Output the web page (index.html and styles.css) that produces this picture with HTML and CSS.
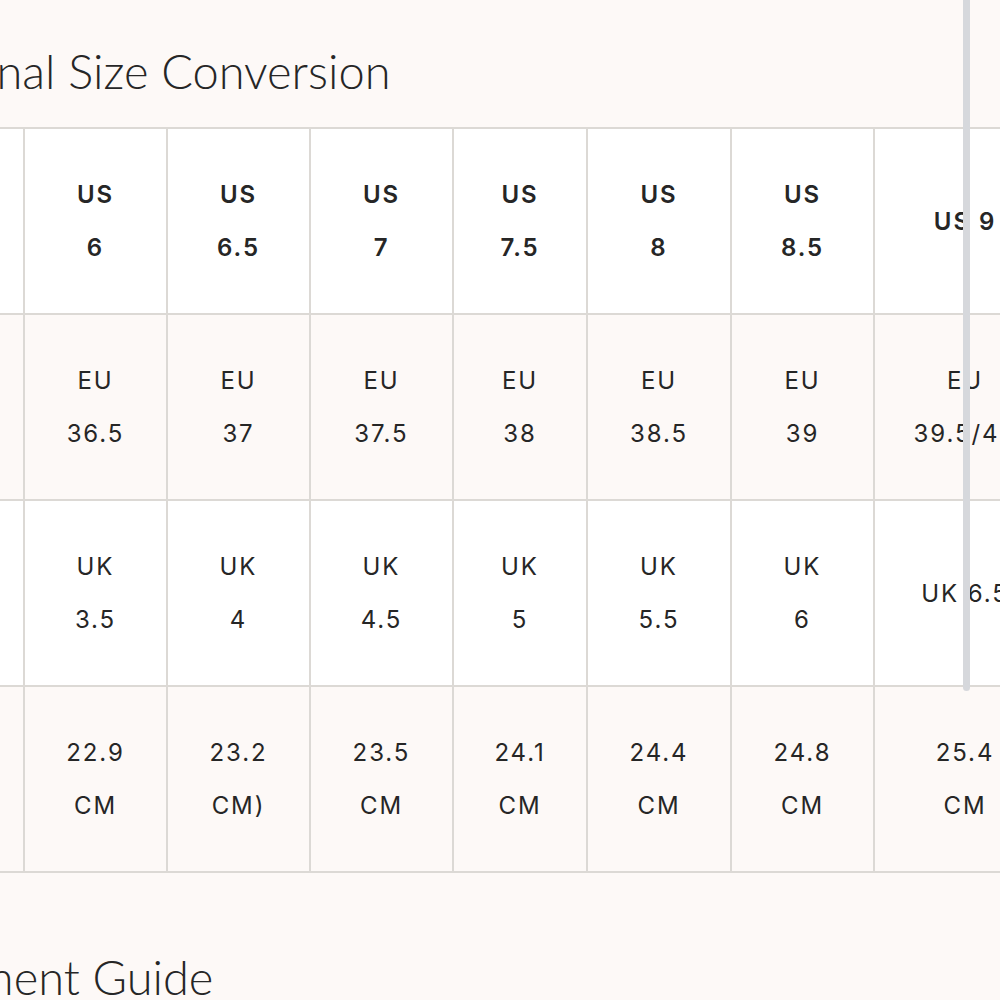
FILE: index.html
```html
<!DOCTYPE html>
<html lang="en">
<head>
<meta charset="utf-8">
<title>Size Guide</title>
<link rel="stylesheet" href="styles.css">
</head>
<body>
<div class="viewport">
  <div class="page">
    <h2 class="section-title first">International Size Conversion</h2>
    <table class="size-table">
      <colgroup>
        <col class="c0"><col class="c1"><col class="c2"><col class="c3"><col class="c4"><col class="c5"><col class="c6"><col class="c7">
      </colgroup>
      <tbody>
        <tr class="row-us">
          <td>US<br>5.5</td><td>US<br>6</td><td>US<br>6.5</td><td>US<br>7</td><td>US<br>7.5</td><td>US<br>8</td><td>US<br>8.5</td><td>US 9</td>
        </tr>
        <tr class="row-eu">
          <td>EU<br>36</td><td>EU<br>36.5</td><td>EU<br>37</td><td>EU<br>37.5</td><td>EU<br>38</td><td>EU<br>38.5</td><td>EU<br>39</td><td>EU<br>39.5/40</td>
        </tr>
        <tr class="row-uk">
          <td>UK<br>3</td><td>UK<br>3.5</td><td>UK<br>4</td><td>UK<br>4.5</td><td>UK<br>5</td><td>UK<br>5.5</td><td>UK<br>6</td><td>UK 6.5</td>
        </tr>
        <tr class="row-cm">
          <td>22.5<br>CM</td><td>22.9<br>CM</td><td>23.2<br>CM)</td><td>23.5<br>CM</td><td>24.1<br>CM</td><td>24.4<br>CM</td><td>24.8<br>CM</td><td>25.4<br>CM</td>
        </tr>
      </tbody>
    </table>
    <h2 class="section-title second">Measurement Guide</h2>
  </div>
  <div class="scroll-indicator"></div>
</div>
</body>
</html>
```

FILE: styles.css
```css
html, body {
  margin: 0;
  padding: 0;
  background: #fdf9f7;
  overflow: hidden;
}

.viewport {
  position: relative;
  width: 1000px;
  height: 1000px;
  overflow: hidden;
}

.page {
  width: 1400px;
  margin-left: -200px;
}

.section-title {
  font-family: "Lato", "Open Sans", sans-serif;
  font-weight: 300;
  font-size: 47px;
  line-height: 1.2;
  color: #262626;
  margin: 0;
}

.section-title.first {
  padding-top: 43px;
  padding-left: 0;
  margin-bottom: 28px;
}

.section-title.second {
  margin-top: 76px;
  padding-left: 1px;
}

.size-table {
  border-collapse: collapse;
  table-layout: fixed;
  width: 1255px;
  font-family: "Inter", "Open Sans", sans-serif;
  font-size: 24px;
  color: #262626;
  letter-spacing: 0.08em;
}

.c0 { width: 223px; }
.c1 { width: 143px; }
.c2 { width: 143px; }
.c3 { width: 143px; }
.c4 { width: 134px; }
.c5 { width: 144px; }
.c6 { width: 143px; }
.c7 { width: 182px; }

.size-table td {
  border: 2px solid #dcd9d5;
  text-align: center;
  vertical-align: middle;
  line-height: 53px;
  height: 184px;
  padding: 0;
}

.row-us td {
  background: #ffffff;
  font-weight: 600;
}

.row-eu td,
.row-cm td {
  background: #fdf9f7;
}

.row-uk td {
  background: #ffffff;
}

.scroll-indicator {
  position: absolute;
  left: 963px;
  top: 0;
  width: 7px;
  height: 691px;
  border-radius: 0 0 4px 4px;
  background: #d6d8dc;
}
```
